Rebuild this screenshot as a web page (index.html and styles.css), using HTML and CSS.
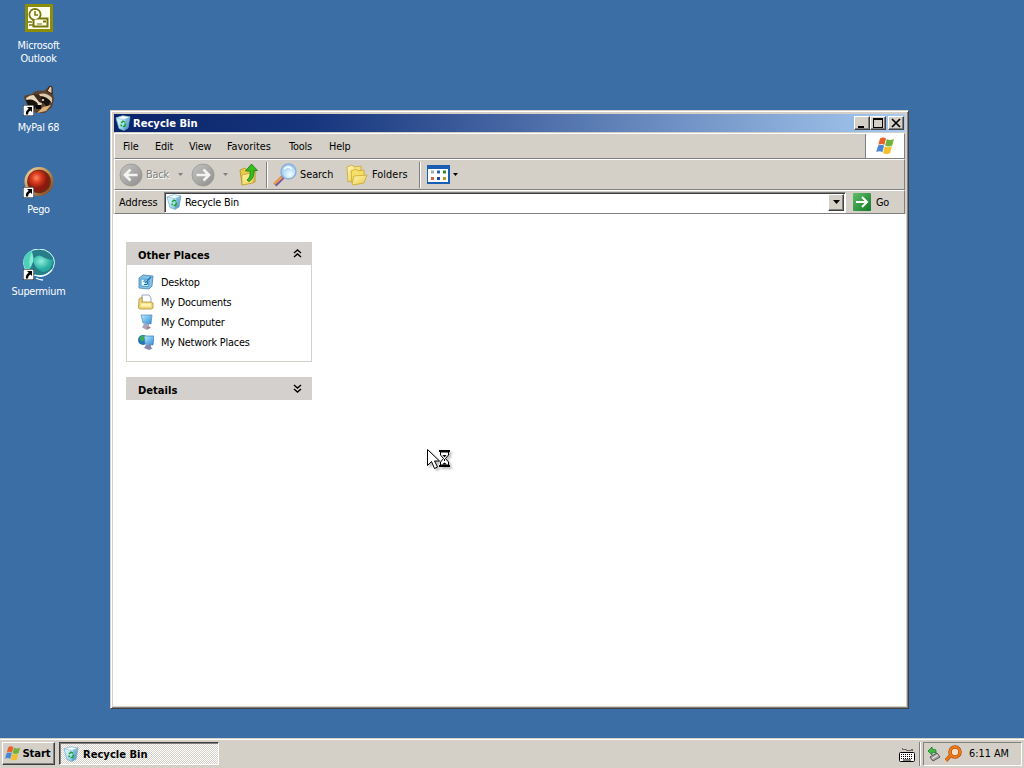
FILE: index.html
```html
<!DOCTYPE html>
<html lang="en">
<head>
<meta charset="utf-8">
<title>Desktop</title>
<link rel="stylesheet" href="styles.css">
</head>
<body>
<svg class="defs" width="0" height="0" aria-hidden="true">
  <defs>
    <linearGradient id="bin-body" x2="1" y2="1"><stop stop-color="#e8f8ff"/><stop offset=".5" stop-color="#b4e2f5"/><stop offset="1" stop-color="#4b91c4"/></linearGradient>
    <linearGradient id="screen" x2="1" y2="1"><stop stop-color="#b9efff"/><stop offset="1" stop-color="#2d8ad6"/></linearGradient>
    <linearGradient id="folder" x2="1" y2="1"><stop stop-color="#fff9b0"/><stop offset="1" stop-color="#eac84a"/></linearGradient>
    <linearGradient id="grey-ball" x2="1" y2="1"><stop stop-color="#c4c4c2"/><stop offset="1" stop-color="#8e8e8c"/></linearGradient>
    <linearGradient id="go" x2="1" y2="1"><stop stop-color="#5fbd68"/><stop offset="1" stop-color="#127a27"/></linearGradient>
    <radialGradient id="red-ball" cx=".4" cy=".35"><stop stop-color="#ff8a62"/><stop offset=".45" stop-color="#dc3c20"/><stop offset="1" stop-color="#8a1a0c"/></radialGradient>
    <linearGradient id="gold-ring" x2="1" y2="1"><stop stop-color="#f5e0a8"/><stop offset=".5" stop-color="#c08a4c"/><stop offset="1" stop-color="#6d3c20"/></linearGradient>
    <radialGradient id="teal" cx=".4" cy=".35"><stop stop-color="#8ff0da"/><stop offset="1" stop-color="#25aba0"/></radialGradient>
    <radialGradient id="lens" cx=".6" cy=".7"><stop stop-color="#f4fdff"/><stop offset="1" stop-color="#a8d8f5"/></radialGradient>
    <symbol id="bin" viewBox="0 0 16 16">
      <path d="M1 3 7 1l8 1-2 11-4 2.500-5-2z" fill="url(#bin-body)" stroke="#6fadcb" stroke-width=".7"/>
      <path d="M1 3l8 1.500L15 2 8 .700z" fill="#f4fcff" stroke="#86b9cf" stroke-width=".6"/>
      <path d="M10 4.500l-1 10.500 4-2 2-11z" fill="#4386b6" opacity=".4"/>
      <path d="M6 8 8 6.200l2 1M10.500 8.500l-.8 2.800-2 .2M6.500 11.300 5.800 9.500" fill="none" stroke="#16a329" stroke-width="1.400"/>
    </symbol>
    <symbol id="flag" viewBox="0 0 20 20">
      <path d="M5 2.500q3-2 6 0L9.300 9q-3-2-6.100 0z" fill="#e9602b"/>
      <path d="M11.800 3q3 2 7.200 0L17.200 9.500q-3.500 2-7.100 0z" fill="#6fb33c"/>
      <path d="M3 9.800q3-2 6.100 0L7.400 16.300q-3-2-6.200 0z" fill="#4a86d6"/>
      <path d="M9.800 10.300q3.500 2 7.100 0l-1.800 6.700q-3.500 2-7 0z" fill="#f3bf2b"/>
    </symbol>
    <symbol id="shortcut" viewBox="0 0 11 11">
      <path d="M0 0h11v11H0z" fill="#fff" stroke="#000"/>
      <path d="M4 2h5v5L7.400 5.400Q5 6.500 5 9.500H3Q2.200 6 5.700 3.700z"/>
    </symbol>
  </defs>
</svg>

<main class="desktop">
  <nav class="shortcuts">
    <a class="shortcut">
      <svg width="32" height="32" viewBox="0 0 32 32">
        <path d="M2 1h28v28H2z" fill="#8e8d08"/><path d="M5 4h22v22H5z" fill="#fffff0"/>
        <circle cx="12" cy="11.500" r="5.500" fill="#fffff0" stroke="#77760b" stroke-width="2"/>
        <path d="M12 8v4h3M5 19h4M6 22h4" fill="none" stroke="#77760b" stroke-width="1.500"/>
        <path d="M10.500 15.500h14v8h-14z" fill="#fffff0" stroke="#77760b" stroke-width="2"/>
        <circle cx="12" cy="11.500" r="4.500" fill="#fffff0"/><path d="M12 8v4h3" fill="none" stroke="#77760b" stroke-width="1.500"/>
        <path d="M20 17.500h3v2h-3zM14 20.500h5v1h-5z" fill="#77760b"/>
      </svg>
      <span>Microsoft<br>Outlook</span>
    </a>
    <a class="shortcut">
      <svg width="32" height="32" viewBox="0 0 32 32">
        <path d="M1 13q0-3 3-3l5-1q4-5 12-3l5-5 3 1 1 7 1 5-2 8-7 6H13l-7-5z" fill="#5a4231"/>
        <path d="M3 13q6-5 12-2l4 8-5 5-9-4z" fill="#ead9bd"/>
        <path d="M3 15q8-2 12 4l-3 5-7-3zM15 10q9-2 13 6l-4 7q-2-6-8-6z" fill="#17130f"/>
        <path d="M10 9l8 1 1 8-3-1z" fill="#3b2a1f"/>
        <path d="M16 9q8-2 13 4v5q-5-7-12-7z" fill="#dfc9ad"/>
        <path d="M24 6l3-5 2 1v7z" fill="#e9caa7" stroke="#2a1b12"/>
        <path d="M13 20h5v4h-5z" fill="#050505"/><path d="M20 22l8-2-5 6-9 2z" fill="#ddb278"/>
        <circle cx="20" cy="15" r="1" fill="#fff"/>
        <use href="#shortcut" x="0" y="20" width="11" height="11"/>
      </svg>
      <span>MyPal 68</span>
    </a>
    <a class="shortcut">
      <svg width="32" height="32" viewBox="0 0 32 32">
        <circle cx="16" cy="14.500" r="14.500" fill="url(#gold-ring)"/><circle cx="16" cy="14.500" r="11.800" fill="#6d2a17"/>
        <circle cx="15.500" cy="14" r="10.500" fill="url(#red-ball)"/>
        <use href="#shortcut" x="0" y="20" width="11" height="11"/>
      </svg>
      <span>Pego</span>
    </a>
    <a class="shortcut">
      <svg width="32" height="32" viewBox="0 0 32 32">
        <ellipse cx="16" cy="13.500" rx="15.500" ry="13.500" fill="#277d88" stroke="#d9fff8" stroke-width="1"/>
        <path d="M1 9q3-7 8-7l1 9q-2 12-7 9Q-1 15 1 9z" fill="#4fd0ba"/><path d="M9 3l2 8-4 8q-2-9 2-16z" fill="#83ead6"/>
        <path d="M10 10q5-6 10-2 3 2 10 3-1 11-10 12Q11 20 10 10z" fill="url(#teal)"/>
        <path d="M12 26q9 4 17-5M13 29q3 2 7 2" fill="none" stroke="#eafffc" stroke-width="1.300"/>
        <use href="#shortcut" x="0" y="20" width="11" height="11"/>
      </svg>
      <span>Supermium</span>
    </a>
  </nav>

  <section class="window">
    <header class="titlebar">
      <svg class="i16"><use href="#bin"/></svg><h1>Recycle Bin</h1>
      <div class="controls">
        <button><svg width="14" height="12"><path d="M3 9h6v2H3z"/></svg></button>
        <button><svg width="14" height="12"><path d="M2 1h10v10H2zM3 3v7h8V3z" fill-rule="evenodd"/></svg></button>
        <button class="close"><svg width="14" height="12"><path d="M3 2l8 8M11 2l-8 8" stroke="#000" stroke-width="1.700"/></svg></button>
      </div>
    </header>
    <div class="menubar">
      <nav><span class="m-file">File</span><span class="m-edit">Edit</span><span class="m-view">View</span><span class="m-fav">Favorites</span><span class="m-tools">Tools</span><span>Help</span></nav>
      <div class="brand"><svg width="20" height="20"><use href="#flag"/></svg></div>
    </div>
    <div class="toolbar">
      <svg class="nav-ball" width="24" height="24" viewBox="0 0 24 24"><circle cx="12" cy="12" r="11" fill="url(#grey-ball)" stroke="#90908e" stroke-width=".7"/><path d="M18.500 12H6M11.500 6.500 6 12l5.500 5.500" fill="none" stroke="#f3f3f1" stroke-width="2.700"/></svg>
      <span class="back">Back</span>
      <svg class="arrow grey" width="5" height="3"><path d="M0 0h5L2.500 3z"/></svg>
      <svg class="forward" width="24" height="24" viewBox="0 0 24 24"><circle cx="12" cy="12" r="11" fill="url(#grey-ball)" stroke="#90908e" stroke-width=".7"/><path d="M5.500 12H18M12.500 6.500 18 12l-5.500 5.500" fill="none" stroke="#f3f3f1" stroke-width="2.700"/></svg>
      <svg class="arrow grey" width="5" height="3"><path d="M0 0h5L2.500 3z"/></svg>
      <svg class="up" width="22" height="24" viewBox="0 0 22 24"><path d="M2 7l5-2 2 2 8-1v13L4 22z" fill="#e8cb4c" stroke="#b89020" stroke-width=".8"/><path d="M4 12l14-3-3 11-11 2z" fill="url(#folder)" stroke="#c9a136" stroke-width=".8"/><path d="M9 17q4-3 3-9H7.500l6-7 6 6.500H16q1 7-5 11z" fill="#35bd20" stroke="#147b12" stroke-width=".8"/></svg>
      <i class="sep"></i>
      <svg class="search" width="24" height="24" viewBox="0 0 24 24"><path d="M10 14l-8 8" stroke="#735b9a" stroke-width="4"/><path d="M9 14l-8 7" stroke="#ed994f" stroke-width="2.500"/><circle cx="15.500" cy="8.500" r="7.500" fill="url(#lens)" stroke="#8eaed9" stroke-width="1.500"/><path d="M11 6q4-4 8 0" fill="none" stroke="#fff" stroke-width="1.500"/></svg>
      <span class="search-label">Search</span>
      <svg class="folders" width="24" height="24" viewBox="0 0 24 24"><path d="M2 4l5-2 2 2 7-1v12L3 19z" fill="url(#folder)" stroke="#cba32f" stroke-width=".8"/><path d="M6 8l5-2 2 2 6-1v10L7 20z" fill="#f6df68" stroke="#cba32f" stroke-width=".8"/><path d="M7 21l2-8 13-1-3 8-11 2z" fill="url(#folder)" stroke="#cba32f" stroke-width=".8"/></svg>
      <span class="folders-label">Folders</span>
      <i class="sep second"></i>
      <svg class="views" width="23" height="19" viewBox="0 0 23 19"><path d="M0 0h23v19H0z" fill="#1a5eb5"/><path d="M1 4h20v13H1z" fill="#fff"/><path d="M4 5.500h3v3H4z" fill="#a5adb5"/><path d="M10 5.500h3v3h-3z" fill="#3164b0"/><path d="M16 5.500h3v3h-3z" fill="#2a8b35"/><path d="M4 12h3v3H4z" fill="#df613d"/><path d="M10 12h3v3h-3z" fill="#1e499b"/><path d="M16 12h3v3h-3z" fill="#b89a26"/></svg>
      <svg class="arrow view-arrow" width="5" height="3"><path d="M0 0h5L2.500 3z"/></svg>
    </div>
    <div class="address">
      <label>Address</label>
      <div class="field"><svg class="i16"><use href="#bin"/></svg><span>Recycle Bin</span><button><svg width="7" height="4"><path d="M0 0h7L3.500 4z"/></svg></button></div>
      <svg class="go" width="18" height="18" viewBox="0 0 18 18"><rect width="18" height="18" rx="1" fill="url(#go)"/><path d="M3 9h11M9 4l5 5-5 5" fill="none" stroke="#fff" stroke-width="2"/></svg>
      <span>Go</span>
    </div>
    <div class="content">
      <aside>
        <section class="panel">
          <h2>Other Places<svg width="9" height="9"><path d="M1 4l3.500-3L8 4M1 8l3.500-3L8 8"/></svg></h2>
          <ul>
            <li><svg class="i16" viewBox="0 0 16 16"><path d="M1 4l4-3 10 1-1 10-3 3-10-1z" fill="#86c1e6" stroke="#4380bb" stroke-width=".8"/><path d="M3 5l8 .5-.5 7L3 12z" fill="#e5faff" stroke="#4c9acb"/><path d="M5.500 7.500l2-1M6 10.500h3l1-3M7 9l6-6" fill="none" stroke="#176eaa" stroke-width="1.200"/></svg>Desktop</li>
            <li><svg class="i16" viewBox="0 0 16 16"><path d="M4 1h7l2 3v6H4z" fill="#fff" stroke="#8193b8" stroke-width=".8"/><path d="M1 5l3-2v5h9l2 1v5l-1.500 1h-12L.5 14z" fill="#efd777" stroke="#af8d38" stroke-width=".8"/><path d="M3 9.500h10v3H3z" fill="#fff4b3"/></svg>My Documents</li>
            <li><svg class="i16" viewBox="0 0 16 16"><path d="M3 1h11l-1 9-8-1z" fill="url(#screen)" stroke="#5184bb" stroke-width=".7"/><path d="M6 10h5v2l2 1.500L9 16l-5-2.500z" fill="#a5a5bd"/><path d="M9 13h2.500v1.500H9z" fill="#c66058"/></svg>My Computer</li>
            <li><svg class="i16" viewBox="0 0 16 16"><circle cx="5" cy="6" r="5" fill="#2374b9"/><path d="M1 5l3-4 3 2-2 5z" fill="#3aae51"/><path d="M6 2h10l-1 9-8-1z" fill="url(#screen)" stroke="#447bb4" stroke-width=".7"/><path d="M8 11h5v2l1.500 1.500L11 16l-5-2z" fill="#8587b0"/></svg>My Network Places</li>
          </ul>
        </section>
        <section class="panel details"><h2>Details<svg width="9" height="9"><path d="M1 1l3.500 3L8 1M1 5l3.500 3L8 5"/></svg></h2></section>
      </aside>
    </div>
  </section>
  <svg class="cursor" width="25" height="24" viewBox="0 0 25 24"><path d="M.5.500v16l4-4 3 7 3-1.500-3-6h5z" fill="#fff" stroke="#000"/><path d="M12 1h11v2H12zM12 16h11v2H12z"/><path d="M13.500 3v3l3 3.500-3 3.500v3h8v-3l-3-3.500 3-3.500V3z" fill="#fff" stroke="#000"/><path d="M15.500 6h4l-2 2.500zM17 10h1v2h-1zM15.500 15l2-1.500 2 1.500v.5h-4z"/></svg>
</main>

<footer class="taskbar">
  <button class="start"><svg width="17" height="17"><use href="#flag"/></svg>Start</button>
  <button class="task"><svg class="i16"><use href="#bin"/></svg>Recycle Bin</button>
  <svg class="keyboard" width="16" height="14" viewBox="0 0 16 14"><path d="M3.500 0v1.500h4v1h5V1M13.500 3V1" fill="none" stroke="#666"/><rect x=".5" y="4.500" width="15" height="9" rx="1" fill="#fff" stroke="#000"/><path d="M2 6.500h12M2 8.500h12M2 10.500h12" stroke="#000" stroke-dasharray="1 1"/><path d="M4 12h8" stroke="#000"/></svg>
  <i class="sep tray-sep"></i>
  <div class="tray">
    <svg width="16" height="16" viewBox="0 0 16 16"><path d="M3 11l7-4 3 4-7 4z" fill="#aaa" stroke="#555"/><path d="M5 12.500l6-3.500" stroke="#eee"/><path d="M1 5l4-4v2l4 1v3L5 6v3z" fill="#44bd43" stroke="#197a27" stroke-width=".8"/></svg>
    <svg width="17" height="17" viewBox="0 0 17 17"><path d="M6 10l-5 5.500" stroke="#a84508" stroke-width="3.500"/><circle cx="10" cy="7" r="5" fill="#f7dfc6" stroke="#a84508" stroke-width="3.500"/><circle cx="10" cy="7" r="5" fill="none" stroke="#f07a18" stroke-width="2.300"/><path d="M6 10l-5 5.500" stroke="#f07a18" stroke-width="2.200"/></svg>
    <time>6:11 AM</time>
  </div>
</footer>
</body>
</html>
```
FILE: styles.css
```css
* { box-sizing: border-box; }
body {
  margin: 0; height: 768px; overflow: hidden;
  display: flex; flex-direction: column;
  background: #3a6ea5; color: #000;
  font: 10.8px/13px "DejaVu Sans Condensed", "DejaVu Sans", sans-serif;
  font-stretch: condensed;
  letter-spacing: -.18px;
  cursor: default;
}
svg { display: block; flex: none; }
.defs { position: absolute; }
button { font: inherit; letter-spacing: inherit; color: inherit; margin: 0; padding: 0; border: 1px solid; border-color: #fff #404040 #404040 #fff; box-shadow: inset -1px -1px #808080; background: #d4d0c8; display: flex; align-items: center; justify-content: center; flex: none; }
.i16 { width: 16px; height: 16px; }

.desktop { flex: 1; position: relative; min-height: 0; }
.shortcuts { width: 76px; padding-top: 3px; display: flex; flex-direction: column; }
.shortcut { height: 82px; display: flex; flex-direction: column; align-items: center; gap: 4px; color: #fff; text-align: center; padding-left: 1px; letter-spacing: -.25px; }

.window {
  position: absolute; left: 110px; top: 110px; width: 799px; height: 599px;
  display: flex; flex-direction: column; padding: 2px;
  background: #d4d0c8; border: 1px solid; border-color: #d4d0c8 #404040 #404040 #d4d0c8;
  box-shadow: inset 1px 1px #fff, inset -1px -1px #808080;
}
.titlebar { height: 18px; flex: none; margin: 1px 1px 0; display: flex; align-items: center; padding: 0 1px; background: linear-gradient(90deg, #0a246a, #16357d 25%, #a6caf0); color: #fff; }
.titlebar h1 { font-size: 11.1px; line-height: 13px; margin: 0 0 0 2px; letter-spacing: 0; flex: 1; }
.controls { display: flex; }
.controls button { width: 16px; height: 14px; }
.controls .close { margin-left: 2px; }

.menubar { height: 26px; flex: none; margin: 1px 1px 0; border: 1px solid; border-color: #fff #808080 #808080 #fff; display: flex; justify-content: space-between; }
.menubar nav { display: flex; align-items: center; padding: 1px 0 0 8px; }
.menubar nav span { width: 51px; }
.menubar nav .m-file { width: 32px; }
.menubar nav .m-edit { width: 34px; }
.menubar nav .m-view { width: 38px; }
.menubar nav .m-fav { width: 62px; letter-spacing: 0; }
.menubar nav .m-tools { width: 40px; }
.brand { width: 39px; background: #fff; border-left: 1px solid #808080; display: flex; align-items: center; justify-content: center; }

.toolbar { height: 31px; flex: none; margin: 0 1px; border: 1px solid; border-color: #fff #808080 #808080 #fff; display: flex; align-items: center; padding-left: 4px; }
.toolbar .back { width: 26px; margin: 0 6px 0 3px; color: #808080; text-shadow: 1px 1px #fff; }
.arrow.grey { fill: #808080; }
.forward { margin: 0 8px; }
.up { margin-left: 10px; }
.sep { width: 2px; height: 26px; flex: none; border-left: 1px solid #808080; border-right: 1px solid #fff; margin-left: 6px; }
.search { margin-left: 5px; }
.search-label { width: 37px; margin-left: 3px; letter-spacing: 0; }
.folders { margin-left: 8px; }
.folders-label { width: 39px; margin-left: 3px; letter-spacing: .08px; }
.second { margin-left: 8px; }
.views { margin-left: 6px; }
.view-arrow { margin-left: 3px; }

.address { height: 24px; flex: none; margin: 0 1px; border: 1px solid; border-color: #fff #808080 #808080 #fff; display: flex; align-items: center; padding-left: 4px; }
.address label { width: 45px; letter-spacing: 0; }
.field { width: 682px; height: 21px; display: flex; align-items: center; background: #fff; border: 1px solid; border-color: #808080 #fff #fff #808080; box-shadow: inset 1px 1px #404040; padding: 1px 1px 1px 1px; }
.field span { flex: 1; margin: 1px 0 0 3px; }
.field button { width: 16px; height: 17px; }
.go { margin: 0 5px 0 7px; }

.content { flex: 1; background: #fff; padding: 28px 0 0 13px; }
.panel { width: 186px; }
.details { margin-top: 15px; }
.panel h2 { height: 23px; margin: 0; padding: 3px 10px 0 12px; display: flex; align-items: center; justify-content: space-between; background: #d4d0cd; font-size: 11.1px; line-height: 13px; letter-spacing: 0; }
.panel h2 svg { fill: none; stroke: #000; stroke-width: 1.4; margin-top: -4px; }
.panel ul { list-style: none; margin: 0; height: 97px; border: 1px solid #d4d0c8; border-top: 0; padding: 7px 0 0 11px; }
.panel li { height: 20px; display: flex; align-items: center; gap: 7px; }

.cursor { position: absolute; left: 427px; top: 449px; filter: drop-shadow(2px 2px 1px #0004); }

.taskbar { height: 30px; flex: none; display: flex; align-items: center; padding: 1px 2px 1px; background: #d4d0c8; border-top: 1px solid #d4d0c8; box-shadow: inset 0 1px #fff; }
.taskbar button { font-weight: bold; height: 23px; }
.taskbar .start { width: 53px; gap: 1px; font-size: 11.3px; padding-right: 2px; }
.taskbar .task { width: 160px; margin-left: 4px; justify-content: flex-start; gap: 4px; padding: 1px 0 0 3px; font-size: 11.1px; letter-spacing: 0; border-color: #404040 #fff #fff #404040; box-shadow: inset 1px 1px #808080; background: repeating-conic-gradient(#fff 0 25%, #d4d0c8 0 50%) 0 0 / 2px 2px; }
.keyboard { margin-left: auto; margin-right: 4px; margin-top: 2px; }
.tray-sep { margin: 0 2px 0 0; height: 24px; }
.tray { width: 99px; height: 24px; display: flex; align-items: center; border: 1px solid; border-color: #808080 #fff #fff #808080; padding: 0 0 0 3px; gap: 2px; }
.tray time { margin-left: 5px; white-space: nowrap; letter-spacing: 0; }
```
